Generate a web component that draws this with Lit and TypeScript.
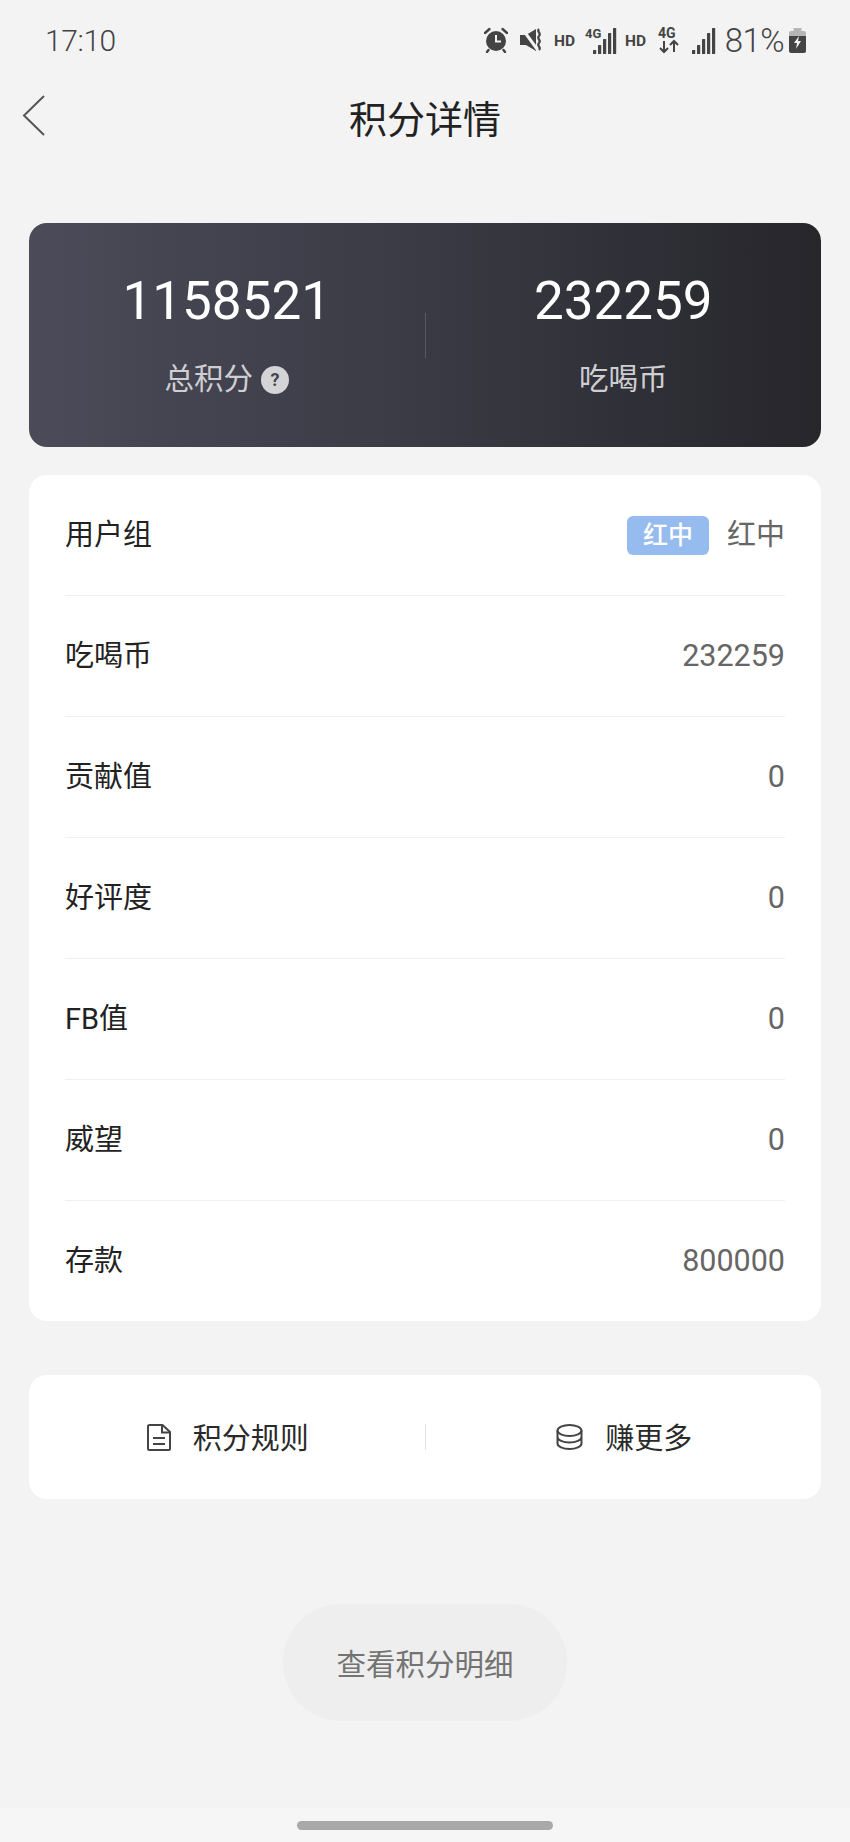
import { LitElement, css, html, svg } from "lit";
import { customElement } from "lit/decorators.js";

const rows = [
  { label: "吃喝币", value: "232259" },
  { label: "贡献值", value: "0" },
  { label: "好评度", value: "0" },
  { label: "FB值", value: "0" },
  { label: "威望", value: "0" },
  { label: "存款", value: "800000" },
];

// signal bars, shared by the two sim indicators
const bars = (x: number, bottom: number) =>
  [4, 9, 15, 21, 26].map(
    (h, i) => svg`<rect x=${x + i * 5} y=${bottom - h} width="3.2" height=${h} rx=".6" fill="#444"></rect>`
  );

@customElement("app-root")
export class AppRoot extends LitElement {
  static styles = css`
    :host {
      display: block;
      width: 850px;
      height: 1842px;
      overflow: hidden;
      background: #f3f3f4;
      font-family: Roboto, "Noto Sans CJK SC", sans-serif;
      color: #222;
    }

    .page {
      display: flex;
      flex-direction: column;
      height: 1842px;
    }

    .status {
      height: 80px;
      flex: none;
      display: flex;
      align-items: center;
      justify-content: space-between;
      padding: 0 44px 0 45px;
      color: #444;
    }

    .time {
      font-size: 30px;
      font-weight: 300;
      letter-spacing: -0.4px;
    }

    .status-icons {
      display: flex;
      align-items: center;
    }

    .status-icons svg {
      display: block;
      flex: none;
    }

    .pct {
      font-size: 33px;
      font-weight: 300;
      margin: 0 5px 0 9px;
      letter-spacing: -0.6px;
    }

    .nav {
      height: 78px;
      flex: none;
      position: relative;
      display: flex;
      align-items: center;
      justify-content: center;
    }

    .back {
      position: absolute;
      left: 22px;
      top: 14px;
    }

    .title {
      font-size: 38px;
      line-height: 1;
      padding-top: 2px;
    }

    .hero {
      flex: none;
      height: 224px;
      margin: 65px 29px 0;
      border-radius: 18px;
      background: linear-gradient(90deg, #4b4b59 0%, #3c3c47 45%, #26262b 100%);
      display: flex;
      align-items: center;
    }

    .hero-col {
      flex: 1;
      display: flex;
      flex-direction: column;
      align-items: center;
      color: #fff;
    }

    .hero-num {
      font-size: 53px;
      line-height: 64px;
      margin-top: -3px;
    }

    .hero-label {
      display: flex;
      align-items: center;
      gap: 8px;
      margin-top: 26px;
      font-size: 29.5px;
      line-height: 40px;
      color: #cfcfd3;
    }

    .help {
      width: 28px;
      height: 28px;
      border-radius: 50%;
      background: #d4d4d6;
      color: #44444e;
      font-size: 18px;
      font-weight: 700;
      line-height: 28px;
      text-align: center;
      margin-top: 3px;
    }

    .hero-divider {
      width: 1px;
      height: 45px;
      background: rgba(255, 255, 255, 0.16);
    }

    .list {
      flex: none;
      margin: 28px 29px 0;
      padding: 0 36px;
      background: #fff;
      border-radius: 18px;
    }

    .row {
      height: 120px;
      display: flex;
      align-items: center;
      justify-content: space-between;
      font-size: 29px;
      border-bottom: 1px solid #f0f0f0;
    }

    .row:last-child {
      border-bottom: none;
    }

    .label {
      padding-bottom: 6px;
    }

    .value {
      color: #666;
      font-size: 30.5px;
      padding-bottom: 2px;
    }

    .group {
      display: flex;
      align-items: center;
      color: #666;
      font-size: 29px;
    }

    .group-name {
      padding-bottom: 7px;
    }

    .badge {
      width: 82px;
      height: 39px;
      margin-right: 18px;
      border-radius: 6px;
      background: #96bbee;
      color: #fff;
      font-size: 25px;
      font-weight: 500;
      line-height: 39px;
      text-align: center;
    }

    .actions {
      flex: none;
      height: 124px;
      margin: 54px 29px 0;
      background: #fff;
      border-radius: 18px;
      display: flex;
      align-items: center;
    }

    .action {
      flex: 1;
      display: flex;
      align-items: center;
      justify-content: center;
      gap: 22px;
      padding-left: 2px;
      font-size: 29px;
      color: #2a2a2a;
    }

    .action span {
      padding-bottom: 2px;
    }

    .action-divider {
      width: 1px;
      height: 26px;
      background: #e4e4e4;
    }

    .detail {
      flex: none;
      align-self: center;
      box-sizing: border-box;
      width: 284px;
      height: 117px;
      margin-top: 105px;
      padding-bottom: 2px;
      border-radius: 58px;
      background: #eeeeee;
      color: #737373;
      font-size: 29.5px;
      display: flex;
      align-items: center;
      justify-content: center;
    }

    .home {
      margin-top: auto;
      height: 34px;
      flex: none;
      background: #f6f6f7;
      display: flex;
      justify-content: center;
      padding-top: 13px;
      box-sizing: border-box;
    }

    .home-bar {
      width: 256px;
      height: 9px;
      border-radius: 5px;
      background: #a9a9a9;
    }
  `;

  private renderStatusIcons() {
    return html`
      <div class="status-icons">
        <svg width="24" height="26" viewBox="0 0 24 26" style="margin-right:11px">
          <circle cx="12" cy="14" r="10" fill="#444"></circle>
          <path d="M12 8v6.500h5" fill="none" stroke="#f3f3f4" stroke-width="2"></path>
          <path d="M1 6 5.500 2M23 6 18.500 2M4.500 23 3 25M19.500 23 21 25" stroke="#444" stroke-width="2.400" stroke-linecap="round"></path>
        </svg>
        <svg width="24" height="26" viewBox="0 0 24 26" style="margin-right:11px">
          <path d="M1 8h6l10-6v22L7 18H1z" fill="#444"></path>
          <path d="M2 0 18 22" stroke="#f3f3f4" stroke-width="3"></path>
          <path d="M20 2c-3 3 3 4 0 7s3 4 0 7 3 4 0 7" fill="none" stroke="#444" stroke-width="2.200"></path>
        </svg>
        <svg width="22" height="18" viewBox="0 0 22 18" style="margin-right:9px">
          <text x="0" y="15" font-family="Roboto" font-size="15.500" font-weight="700" fill="#444">HD</text>
        </svg>
        <svg width="32" height="28" viewBox="0 0 32 28" style="margin-right:8px">
          <text x="0" y="12" font-family="Roboto" font-size="13" font-weight="700" fill="#444">4G</text>
          ${bars(8, 28)}
        </svg>
        <svg width="22" height="18" viewBox="0 0 22 18" style="margin-right:11px">
          <text x="0" y="15" font-family="Roboto" font-size="15.500" font-weight="700" fill="#444">HD</text>
        </svg>
        <svg width="22" height="28" viewBox="0 0 22 28" style="margin-right:12px">
          <text x="0" y="12" font-family="Roboto" font-size="14" font-weight="700" fill="#444">4G</text>
          <path d="M6 15v11M2 22l4 4 4-4M16 26V15M12 19l4-4 4 4" fill="none" stroke="#444" stroke-width="2"></path>
        </svg>
        <svg width="24" height="28" viewBox="0 0 24 28">${bars(0, 28)}</svg>
        <span class="pct">81%</span>
        <svg width="17" height="25" viewBox="0 0 17 25">
          <path d="M4.500 0h8v3h-8z" fill="#b5b5b5"></path>
          <path d="M2 3h13a2 2 0 0 1 2 2v3H0V5a2 2 0 0 1 2-2z" fill="#b5b5b5"></path>
          <path d="M0 8h17v15a2 2 0 0 1-2 2H2a2 2 0 0 1-2-2z" fill="#444"></path>
          <path d="M10 8 5 15h3l-1 6 5-8H9z" fill="#f3f3f4"></path>
        </svg>
      </div>
    `;
  }

  render() {
    return html`
      <div class="page">
        <div class="status">
          <span class="time">17:10</span>
          ${this.renderStatusIcons()}
        </div>
        <div class="nav">
          <svg class="back" width="24" height="44" viewBox="0 0 24 44">
            <path d="M22 2 2 21.500 22 41" fill="none" stroke="#555" stroke-width="2"></path>
          </svg>
          <span class="title">积分详情</span>
        </div>

        <div class="hero">
          <div class="hero-col">
            <div class="hero-num">1158521</div>
            <div class="hero-label">总积分<span class="help">?</span></div>
          </div>
          <div class="hero-divider"></div>
          <div class="hero-col">
            <div class="hero-num">232259</div>
            <div class="hero-label">吃喝币</div>
          </div>
        </div>

        <div class="list">
          <div class="row">
            <span class="label">用户组</span>
            <span class="group"><span class="badge">红中</span><span class="group-name">红中</span></span>
          </div>
          ${rows.map(
            (r) => html`
              <div class="row">
                <span class="label">${r.label}</span>
                <span class="value">${r.value}</span>
              </div>
            `
          )}
        </div>

        <div class="actions">
          <div class="action">
            <svg width="24" height="27" viewBox="0 0 24 27">
              <path d="M2.500 1h13l7.500 7v17a1 1 0 0 1-1 1H2.500a1.500 1.500 0 0 1-1.500-1.500V2.500A1.500 1.500 0 0 1 2.500 1z" fill="none" stroke="#444" stroke-width="2"></path>
              <path d="M15 1v7.500h8M6 14h12M6 20h12" fill="none" stroke="#444" stroke-width="2"></path>
            </svg>
            <span>积分规则</span>
          </div>
          <div class="action-divider"></div>
          <div class="action">
            <svg width="27" height="26" viewBox="0 0 27 26">
              <ellipse cx="13.500" cy="6.500" rx="12" ry="5.500" fill="none" stroke="#444" stroke-width="2"></ellipse>
              <path d="M1.500 6.500v13c0 3 5.400 5.500 12 5.500s12-2.500 12-5.500v-13M1.500 13c0 3 5.400 5.500 12 5.500s12-2.500 12-5.500" fill="none" stroke="#444" stroke-width="2"></path>
            </svg>
            <span>赚更多</span>
          </div>
        </div>

        <div class="detail">查看积分明细</div>

        <div class="home"><div class="home-bar"></div></div>
      </div>
    `;
  }
}
